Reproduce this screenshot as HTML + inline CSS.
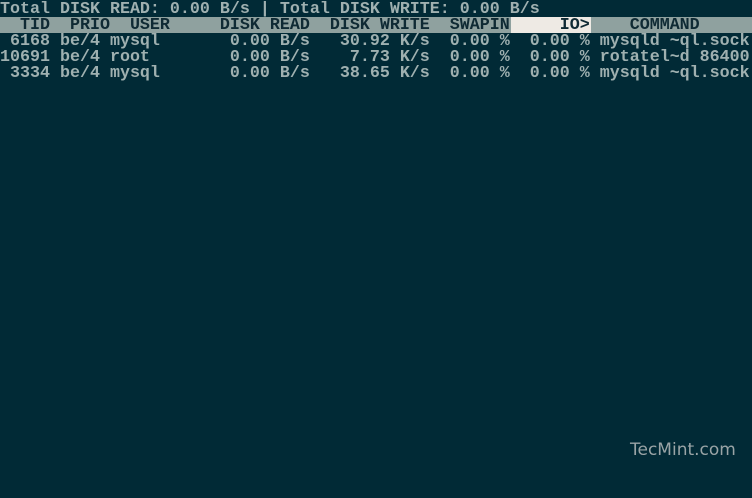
<!DOCTYPE html>
<html><head><meta charset="utf-8"><style>
html,body{margin:0;padding:0;width:752px;height:498px;overflow:hidden;background:#012a36;}
pre{margin:0;position:absolute;left:0;font-family:"Liberation Mono","Courier New",monospace;font-weight:bold;font-size:16.67px;line-height:16px;color:#9fb0b0;white-space:pre;}
.hdr{position:absolute;left:0;top:17px;width:752px;height:16px;background:#8fa19f;}
.io{position:absolute;left:511px;top:17px;width:80px;height:16px;background:#eeeae4;}
.h{color:#0f2a34;}
.wm{position:absolute;left:630px;top:440px;font-family:"DejaVu Sans","Liberation Sans",sans-serif;font-size:17px;color:#9aa4a6;}
</style></head><body>
<pre style="top:2px">Total DISK READ: 0.00 B/s | Total DISK WRITE: 0.00 B/s</pre>
<div class="hdr"></div><div class="io"></div>
<pre class="h" style="top:18px">  TID  PRIO  USER     DISK READ  DISK WRITE  SWAPIN     IO>    COMMAND</pre>
<pre style="top:34px"> 6168 be/4 mysql       0.00 B/s   30.92 K/s  0.00 %  0.00 % mysqld ~ql.sock
10691 be/4 root        0.00 B/s    7.73 K/s  0.00 %  0.00 % rotatel~d 86400
 3334 be/4 mysql       0.00 B/s   38.65 K/s  0.00 %  0.00 % mysqld ~ql.sock</pre>
<div class="wm">TecMint.com</div>
</body></html>
